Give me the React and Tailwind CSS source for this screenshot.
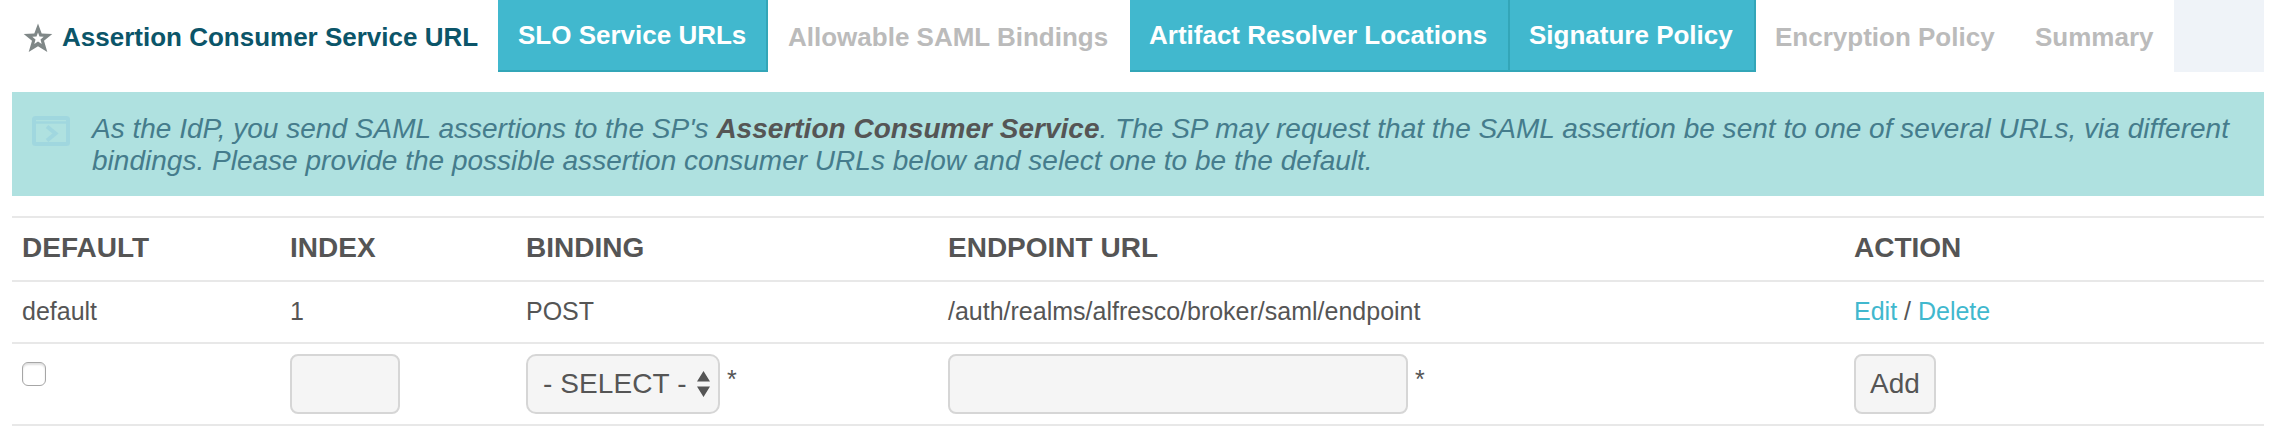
const TABS = [
  { label: 'Assertion Consumer Service URL', kind: 'current', box: 'w-[498px] pl-[22px] flex' },
  { label: 'SLO Service URLs', kind: 'link', box: 'w-[270px] pl-5' },
  { label: 'Allowable SAML Bindings', kind: 'off', box: 'w-[362px] pl-5' },
  { label: 'Artifact Resolver Locations', kind: 'link', box: 'w-[380px] pl-[19px]' },
  { label: 'Signature Policy', kind: 'link', box: 'w-[246px] pl-[19px]' },
  { label: 'Encryption Policy', kind: 'off', box: 'w-[260px] pl-[19px]' },
  { label: 'Summary', kind: 'off', box: 'w-[158px] pl-[19px]' },
];

const KIND = {
  current: 'bg-white text-[#0b5569] pt-[21px]',
  link: 'bg-[#41b8ce] text-white border-r-2 border-b-2 border-[#33a6b8] pt-[19px]',
  off: 'bg-white text-[#bbbbbb] pt-[21px]',
};

function Tab({ tab }) {
  return (
    <li className={`h-[72px] shrink-0 whitespace-nowrap text-[26px] leading-[32px] font-bold ${KIND[tab.kind]} ${tab.box}`}>
      {tab.kind === 'current' && (
        <svg className="mr-2 h-8 w-8 shrink-0" viewBox="0 0 32 32">
          <path
            fill="#7f8787"
            fillRule="evenodd"
            d="M16 2.500 L19.700 12.500 L30.300 13 L22 19.700 L25.300 31 L16 25.200 L6.700 31 L10 19.700 L1.700 13 L12.300 12.500 Z M16 11.500 L14.500 15.500 L10.300 15.800 L13.500 18.500 L12.300 22.900 L16 20.600 L19.700 22.900 L18.500 18.500 L21.700 15.800 L17.500 15.500 Z"
          />
        </svg>
      )}
      <span>{tab.label}</span>
    </li>
  );
}

const GRID = 'grid grid-cols-[268px_236px_422px_906px_1fr] pl-[10px] border-b-2 border-[#e8e8e8]';
const FIELD = 'h-[60px] border-2 border-[#d6d6d6] bg-[#f5f5f5]';

export default function App() {
  return (
    <div className="h-[446px] w-[2274px] overflow-hidden bg-white font-['Liberation_Sans',Arial,sans-serif] text-[#555555]">
      <ul className="mr-[10px] flex h-[72px] bg-[#eff3f8]">
        {TABS.map((t) => (
          <Tab key={t.label} tab={t} />
        ))}
      </ul>

      <div className="mt-5 mr-[10px] ml-3 flex h-[104px] bg-[#afe1e0] pt-[21px] pl-5">
        <svg className="mt-[3px] h-[30px] w-[38px] shrink-0" viewBox="0 0 38 30" fill="none" stroke="#a0d7df" strokeWidth="4">
          <rect x="2" y="2" width="34" height="26" rx="1.5" />
          <path d="M2 6.500h34" strokeWidth="2.500" />
          <path d="M15 10.500l8.500 7-8.500 7" />
        </svg>
        <p className="ml-[22px] whitespace-nowrap text-[28px] leading-[32px] tracking-[0.012px] text-[#457c8c] italic">
          As the IdP, you send SAML assertions to the SP's <b className="text-[#555555]">Assertion Consumer Service</b>. The SP may request that the SAML assertion be sent to one of several URLs, via different
          <br />
          bindings. Please provide the possible assertion consumer URLs below and select one to be the default.
        </p>
      </div>

      <div className="mt-5 mr-[10px] ml-3 border-t-2 border-[#e8e8e8]">
        <div className={`${GRID} h-[64px] pt-[14px] text-[28px] leading-[32px] font-bold`}>
          <span>DEFAULT</span>
          <span>INDEX</span>
          <span>BINDING</span>
          <span>ENDPOINT URL</span>
          <span>ACTION</span>
        </div>
        <div className={`${GRID} h-[62px] pt-[13px] text-[25px] leading-[32px]`}>
          <span>default</span>
          <span>1</span>
          <span>POST</span>
          <span>/auth/realms/alfresco/broker/saml/endpoint</span>
          <span>
            <a className="text-[#41b8ce]">Edit</a> / <a className="text-[#41b8ce]">Delete</a>
          </span>
        </div>
        <div className={`${GRID} h-[82px] pt-[10px] text-[28px] leading-[32px]`}>
          <div className="mt-2 h-6 w-6 rounded-md border border-[#a6a6a6] bg-white shadow-[inset_0_2px_2px_#e0e0e0]" />
          <div className={`${FIELD} w-[110px] rounded-lg`} />
          <div className="flex">
            <div className={`${FIELD} flex w-[194px] items-center rounded-[10px] pl-[15px]`}>
              <span className="w-[144px] whitespace-nowrap tracking-[0.1px]">- SELECT -</span>
              <svg className="ml-[10px] h-[26px] w-[13px] shrink-0" viewBox="0 0 13 26" fill="#555555">
                <path d="M6.500 0 13 10.500H0zM6.500 26 13 15.500H0z" />
              </svg>
            </div>
            <span className="ml-[7px] pt-[9px] text-[25px]">*</span>
          </div>
          <div className="flex">
            <div className={`${FIELD} w-[460px] rounded-lg`} />
            <span className="ml-[7px] pt-[9px] text-[25px]">*</span>
          </div>
          <div className={`${FIELD} flex w-[82px] items-center justify-center rounded-lg`}>Add</div>
        </div>
      </div>
    </div>
  );
}
